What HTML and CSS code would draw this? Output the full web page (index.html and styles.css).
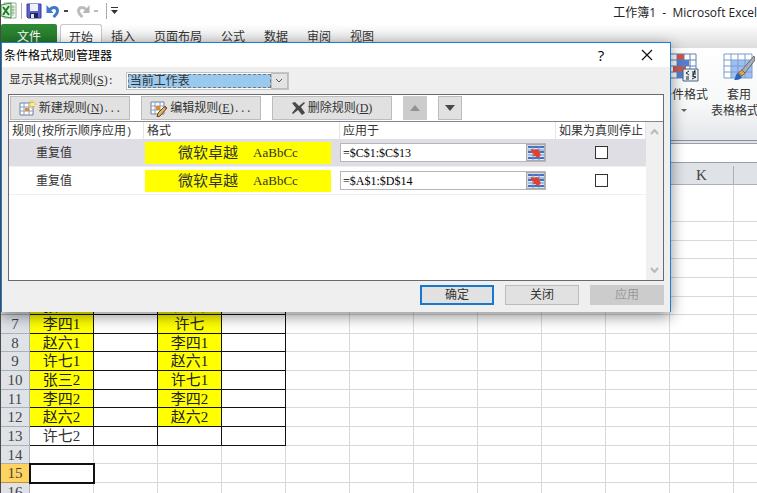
FILE: index.html
```html
<!DOCTYPE html>
<html lang="zh-CN">

<head>
    <meta charset="UTF-8">
    <meta name="viewport" content="width=device-width, initial-scale=1.0">
    <title>工作簿1 - Microsoft Excel</title>
    <link rel="stylesheet" href="styles.css">
</head>

<body>
    <header class="title-bar">
        <div class="quick-access">
            <svg class="app-icon" width="16" height="18" viewBox="0 0 16 18">
                <path d="M3 1h12v15H3z" fill="#fff" stroke="#8cb08c"/>
                <path d="M9 5h5M9 8h5M9 11h5M12 3v11" stroke="#8cbc8c"/>
                <path d="M0 3l10-2v15L0 14z" fill="#e3f1df" stroke="#3b8b44"/>
                <path d="M2 5l6 8M8 4l-6 9" stroke="#16812b" stroke-width="2"/>
            </svg>
            <span class="divider"></span>
            <button class="icon-btn" aria-label="保存">
                <svg width="16" height="16" viewBox="0 0 16 16">
                    <path d="M1 1h14v14H2l-1-1z" fill="#5b62cf" stroke="#3b3d9c"/>
                    <path d="M4 1h8v7H4z" fill="#eef2fc"/>
                    <path d="M4 10h8v5H4z" fill="#20264f"/>
                    <path d="M5 11h3v4H5z" fill="#dde2f2"/>
                </svg>
            </button>
            <button class="icon-btn" aria-label="撤消">
                <svg width="14" height="14" viewBox="0 0 13 14">
                    <path d="M3 6c3-4 8-3 8 1 0 3-2 4-4 6" fill="none" stroke="#3f78c8" stroke-width="3"/>
                    <path d="M0 1v8h7z" fill="#3f78c8"/>
                </svg>
            </button>
            <span class="caret"></span>
            <button class="icon-btn" aria-label="恢复">
                <svg width="14" height="14" viewBox="0 0 13 14">
                    <path d="M10 6c-3-4-8-3-8 1 0 3 2 4 4 6" fill="none" stroke="#bdbdbd" stroke-width="3"/>
                    <path d="M13 1v8H6z" fill="#b5b5b5"/>
                </svg>
            </button>
            <span class="caret disabled"></span>
            <span class="divider"></span>
            <svg width="7" height="7" viewBox="0 0 7 7">
                <path d="M0 0h7v1H0zM0 3h7L3.500 7z" fill="#333"/>
            </svg>
        </div>
        <div class="window-title">工作簿1 &nbsp;- &nbsp;Microsoft Excel</div>
    </header>

    <nav class="tabs">
        <button class="tab file">文件</button>
        <button class="tab active">开始</button>
        <button class="tab">插入</button>
        <button class="tab">页面布局</button>
        <button class="tab">公式</button>
        <button class="tab">数据</button>
        <button class="tab">审阅</button>
        <button class="tab">视图</button>
    </nav>

    <div class="ribbon">
        <button class="ribbon-btn">
            <svg width="32" height="30" viewBox="0 0 32 30">
                <path d="M2 1h26v24H2z" fill="#fff"/>
                <path d="M9 1h7v6H9zM5 13h13v6H5z" fill="#e2513f"/>
                <path d="M9 7h12v6H9zM9 19h6v6H9z" fill="#4f80dd"/>
                <path d="M2 1h26v24H2zM2 7h26M2 13h26M2 19h26M9 1v24M16 1v24M22 1v24" fill="none" stroke="#6480ad"/>
                <path d="M15 16h15v12H15z" fill="#eaf1f8" stroke="#47617f"/>
                <path d="M21 18l-3 2 3 2M18 24h3M24 19h4M24 21h4M27 17l-2 6M24 23l4 1-4 2M18 26h3" fill="none" stroke="#222"/>
            </svg>
            <span>条件格式</span>
            <span class="caret"></span>
        </button>
        <button class="ribbon-btn">
            <svg width="32" height="30" viewBox="0 0 32 30">
                <path d="M1 1h28v24H1z" fill="#fff"/>
                <path d="M8 7h21v18H8z" fill="#9dbff5"/>
                <path d="M1 1h28v24H1zM1 7h28M1 13h28M1 19h28M8 1v24M15 1v24M22 1v24" fill="none" stroke="#7b9cc9"/>
                <path d="M31 3l-12 14 3 3 10-13z" fill="#a7afb5" stroke="#666e75"/>
                <path d="M19 17l3 3-3 3-4-3z" fill="#d7a15b" stroke="#98652b"/>
                <path d="M15 20l4 4c-2 3-5 3-8 3 2-2 1-6 4-7z" fill="#2e63bc"/>
            </svg>
            <span>套用</span>
            <span class="with-caret">表格格式<span class="caret"></span></span>
        </button>
    </div>

    <div class="formula-bar"></div>

    <main class="sheet">
        <table class="grid">
            <thead>
                <tr>
                    <th class="corner"></th>
                    <th>A</th><th>B</th><th>C</th><th>D</th><th>E</th><th>F</th><th>G</th><th>H</th><th>I</th><th>J</th><th>K</th><th></th>
                </tr>
            </thead>
            <tbody id="grid-body"></tbody>
        </table>
    </main>

    <section class="dialog" role="dialog" aria-labelledby="dialog-title">
        <div class="dialog-title">
            <h1 id="dialog-title">条件格式规则管理器</h1>
            <button class="title-btn help" aria-label="帮助">?</button>
            <button class="title-btn" aria-label="关闭窗口">
                <svg width="12" height="12" viewBox="0 0 12 12">
                    <path d="M1 1l10 10M11 1L1 11" stroke="#111" stroke-width="1.200"/>
                </svg>
            </button>
        </div>
        <div class="dialog-body">
            <div class="scope">
                <label for="scope">显示其格式规则(<u>S</u>)<span class="mono">:</span></label>
                <div class="select-box">
                    <select id="scope">
                        <option>当前工作表</option>
                        <option>当前选择</option>
                    </select>
                    <svg class="select-arrow" width="17" height="16" viewBox="0 0 17 16">
                        <path d="M0 0h17v16H0z" fill="#bdbdbd"/>
                        <path d="M1 1h15v14H1z" fill="#e3e3e3"/>
                        <path d="M5 6l3 3 3-3" fill="none" stroke="#555"/>
                    </svg>
                </div>
            </div>

            <div class="rules">
                <div class="toolbar">
                    <button class="btn wide">
                        <svg width="18" height="17" viewBox="0 0 18 17">
                            <path d="M1 3h13v12H1z" fill="#fff" stroke="#6d80a3"/>
                            <path d="M1 7h13M1 11h13M5 3v12M10 3v12" stroke="#8b9cba"/>
                            <path d="M6 8h4v3H6z" fill="#d98d35"/>
                            <path d="M13 0v9M9 4h9M10 1l6 6M16 1l-6 6" stroke="#f2c440"/>
                            <path d="M12 3h3v3h-3z" fill="#fff08c"/>
                        </svg>
                        <span>新建规则(<u>N</u>)<span class="mono">...</span></span>
                    </button>
                    <button class="btn wide">
                        <svg width="18" height="17" viewBox="0 0 18 17">
                            <path d="M1 2h13v12H1z" fill="#fff" stroke="#6d80a3"/>
                            <path d="M1 6h13M1 10h13M5 2v12M10 2v12" stroke="#8b9cba"/>
                            <path d="M6 6h4v4H6z" fill="#d98d35"/>
                            <path d="M15 6l2 2-7 8-3 1 1-4z" fill="#e9b556" stroke="#57452c"/>
                            <path d="M15 6l2 2-2 1-1-2z" fill="#ca554c"/>
                        </svg>
                        <span>编辑规则(<u>E</u>)<span class="mono">...</span></span>
                    </button>
                    <button class="btn wide">
                        <svg width="14" height="13" viewBox="0 0 14 13">
                            <path d="M0 1l3-1 4 4 5-4 1 1-4 4 4 6-3 2-4-5-5 4-1-1 4-5z" fill="#484848"/>
                        </svg>
                        <span>删除规则(<u>D</u>)</span>
                    </button>
                    <button class="btn square" aria-label="上移" disabled>
                        <svg width="10" height="6" viewBox="0 0 10 6"><path d="M5 0l5 6H0z" fill="#929292"/></svg>
                    </button>
                    <button class="btn square" aria-label="下移">
                        <svg width="10" height="6" viewBox="0 0 10 6"><path d="M0 0h10L5 6z" fill="#484848"/></svg>
                    </button>
                </div>
                <div class="list">
                    <table class="rule-table">
                        <thead>
                            <tr>
                                <th class="col-rule">规则<span class="mono">(</span>按所示顺序应用<span class="mono">)</span></th>
                                <th class="col-format">格式</th>
                                <th class="col-range">应用于</th>
                                <th class="col-stop">如果为真则停止</th>
                            </tr>
                        </thead>
                        <tbody>
                            <tr class="selected">
                                <td class="name">重复值</td>
                                <td><div class="preview">微软卓越<span class="sample">AaBbCc</span></div></td>
                                <td>
                                    <div class="range">
                                        <input type="text" value="=$C$1:$C$13" aria-label="应用于">
                                        <button class="picker" aria-label="选择区域">
                                            <svg width="16" height="14" viewBox="0 0 16 14">
                                                <path d="M0 0h16v14H0z" fill="#dce8fa"/>
                                                <path d="M0 1h16M0 6h16M0 12h16" stroke="#466fc6" stroke-width="2"/>
                                                <path d="M0 4h16M0 9h16M5 0v14M11 0v14" stroke="#7590bd"/>
                                                <path d="M3 3l3 1 2-1 3 1v2l2 3-3 3-3-2H5l1-2-3-2z" fill="#df422d"/>
                                            </svg>
                                        </button>
                                    </div>
                                </td>
                                <td class="stop"><input type="checkbox" aria-label="如果为真则停止"></td>
                            </tr>
                            <tr>
                                <td class="name">重复值</td>
                                <td><div class="preview">微软卓越<span class="sample">AaBbCc</span></div></td>
                                <td>
                                    <div class="range">
                                        <input type="text" value="=$A$1:$D$14" aria-label="应用于">
                                        <button class="picker" aria-label="选择区域">
                                            <svg width="16" height="14" viewBox="0 0 16 14">
                                                <path d="M0 0h16v14H0z" fill="#dce8fa"/>
                                                <path d="M0 1h16M0 6h16M0 12h16" stroke="#466fc6" stroke-width="2"/>
                                                <path d="M0 4h16M0 9h16M5 0v14M11 0v14" stroke="#7590bd"/>
                                                <path d="M3 3l3 1 2-1 3 1v2l2 3-3 3-3-2H5l1-2-3-2z" fill="#df422d"/>
                                            </svg>
                                        </button>
                                    </div>
                                </td>
                                <td class="stop"><input type="checkbox" aria-label="如果为真则停止"></td>
                            </tr>
                        </tbody>
                    </table>
                    <div class="scrollbar">
                        <svg width="9" height="6" viewBox="0 0 9 6"><path d="M1 5l3.500-4L8 5" fill="none" stroke="#b9b9b9" stroke-width="2"/></svg>
                        <svg width="9" height="6" viewBox="0 0 9 6"><path d="M1 1l3.500 4L8 1" fill="none" stroke="#b9b9b9" stroke-width="2"/></svg>
                    </div>
                </div>
            </div>

            <div class="actions">
                <button class="btn default">确定</button>
                <button class="btn">关闭</button>
                <button class="btn" disabled>应用</button>
            </div>
        </div>
    </section>

    <script src="script.js"></script>
</body>

</html>
```

FILE: styles.css
```css
* {
    box-sizing: border-box;
}

body {
    margin: 0;
    height: 100vh;
    overflow: hidden;
    position: relative;
    border-left: 1px solid #4a4a4a;
    background-color: #fff;
    color: #333;
    font-family: "Liberation Serif", "Noto Sans CJK SC", sans-serif;
    font-size: 12px;
    line-height: 16px;
}

button,
input,
select {
    font: inherit;
    color: inherit;
    margin: 0;
    padding: 0;
}

svg {
    display: block;
    flex: none;
}

.mono {
    font-family: "Liberation Mono", monospace;
    font-size: 10px;
    line-height: 1;
}

/* title bar */
.title-bar {
    display: flex;
    justify-content: space-between;
    height: 24px;
    font-family: "Open Sans", "Noto Sans CJK SC", sans-serif;
}

.quick-access {
    display: flex;
    align-items: center;
    gap: 4px;
    height: 21px;
}

.quick-access .caret {
    margin-right: 4px;
}

.divider {
    width: 1px;
    height: 16px;
    background-color: #aaa;
}

.icon-btn {
    border: none;
    background: none;
}

.caret {
    width: 4px;
    height: 2px;
    background-color: #444;
}

.caret.disabled {
    background-color: #bbb;
}

.window-title {
    padding-top: 5px;
    color: #222;
    white-space: nowrap;
}

/* ribbon */
.tabs {
    display: flex;
    height: 24px;
    background: linear-gradient(#fff, #dcdcdc);
    font-family: "Noto Sans CJK SC", sans-serif;
}

.tab {
    border: none;
    background: none;
    padding: 0;
    margin-right: 19px;
    white-space: nowrap;
}

.tab.file {
    width: 56px;
    margin-right: 3px;
    border-radius: 2px 2px 0 0;
    background: linear-gradient(#2f8a35, #1d6f25);
    color: #fff;
}

.tab.active {
    width: 42px;
    margin-right: 9px;
    border: 1px solid #c4c7cb;
    border-bottom: none;
    border-radius: 3px 3px 0 0;
    background-color: #fff;
}

.ribbon {
    display: flex;
    gap: 3px;
    height: 93px;
    padding: 5px 0 0 659px;
    border-bottom: 1px solid #8b9097;
    background: linear-gradient(#fff, #f7f8f8 60%, #e4e7eb);
    font-family: "Noto Sans CJK SC", sans-serif;
}

.ribbon-btn {
    display: flex;
    flex: none;
    flex-direction: column;
    align-items: center;
    border: none;
    background: none;
    white-space: nowrap;
}

.ribbon-btn svg {
    margin-bottom: 3px;
}

.ribbon-btn .caret {
    width: 6px;
    height: 3px;
    margin-top: 7px;
    background-color: #666;
    clip-path: polygon(0 0, 100% 0, 50% 100%);
}

.with-caret {
    display: flex;
    gap: 2px;
}

.formula-bar {
    height: 25px;
    border: solid #dfe3e8;
    border-width: 2px 0 3px;
    box-shadow: inset 0 1px #9ba0a8, inset 0 -1px #9ba0a8;
}

/* worksheet */
.sheet {
    overflow: hidden;
}

.grid {
    width: 797px;
    table-layout: fixed;
    border-collapse: separate;
    border-spacing: 0;
    font-size: 15px;
    line-height: 16px;
}

.grid th,
.grid td {
    height: 19px;
    padding: 0;
    border: solid #d9d9d9;
    border-width: 0 1px 1px 0;
    font-weight: normal;
    text-align: center;
    white-space: nowrap;
}

.grid .short td,
.grid .short th {
    height: 18px;
}

.grid .tall td,
.grid .tall th {
    height: 37px;
}

.grid th {
    border-color: #a9b0b8;
    background-color: #dfe3e8;
    color: #444;
}

.grid .corner {
    width: 29px;
}

.grid .boxed {
    border-color: #111;
}

.grid .duplicate {
    background-color: #ff0;
    color: #222;
}

.grid .current th {
    border-color: #c09330;
    background-color: #ffd35f;
}

.grid .cursor {
    outline: 2px solid #111;
    outline-offset: -1px;
}

/* dialog */
.dialog {
    position: absolute;
    top: 42px;
    left: 0;
    width: 670px;
    border: 1px solid #1a7dd0;
    border-bottom: none;
    background-color: #efefef;
    box-shadow: 0 4px 14px rgba(0, 0, 0, 0.45);
}

.dialog-title {
    display: flex;
    align-items: center;
    height: 24px;
    padding-left: 2px;
    background-color: #fff;
    color: #000;
}

.dialog-title h1 {
    flex: 1;
    margin: 0;
    font-family: "Noto Sans CJK SC", sans-serif;
    font-size: 12px;
    font-weight: normal;
    line-height: 16px;
}

.title-btn {
    display: flex;
    align-items: center;
    justify-content: center;
    width: 46px;
    height: 24px;
    border: none;
    background: none;
}

.title-btn.help {
    font-family: "Open Sans", sans-serif;
    font-size: 15px;
}

.dialog-body {
    padding: 5px 6px 7px;
}

.scope {
    display: flex;
    gap: 12px;
    height: 22px;
    padding-left: 1px;
}

.select-box {
    position: relative;
    width: 163px;
    height: 18px;
    border: 1px solid #c4c4c4;
    background-color: #fff;
}

.select-box select {
    appearance: none;
    display: block;
    width: 143px;
    height: 14px;
    margin: 1px;
    padding-left: 1px;
    border: 1px dashed #777;
    border-radius: 0;
    background-color: #99c9ef;
    line-height: 12px;
}

.select-arrow {
    position: absolute;
    top: 0;
    right: 0;
    pointer-events: none;
}

.rules {
    border: 1px solid #696970;
    background-color: #fff;
}

.toolbar {
    display: flex;
    gap: 11px;
    padding: 1px;
    border-bottom: 1px solid #85858f;
}

.btn {
    display: flex;
    align-items: center;
    justify-content: center;
    gap: 2px;
    width: 74px;
    height: 20px;
    border: 1px solid #bcbcbc;
    background-color: #e1e1e1;
    white-space: nowrap;
}

.btn.wide {
    width: 120px;
    height: 24px;
}

.btn.square {
    width: 24px;
    height: 24px;
}

.btn.default {
    border: 2px solid #1479cf;
}

.btn:disabled {
    border-color: #ccc;
    background-color: #ccc;
    color: #9a9a9a;
}

.list {
    display: flex;
    height: 158px;
}

.rule-table {
    flex: 1;
    align-self: flex-start;
    table-layout: fixed;
    border-collapse: separate;
    border-spacing: 0;
}

.rule-table th {
    height: 17px;
    padding: 0 0 0 3px;
    border-right: 1px solid #e5e5e5;
    font-weight: normal;
    text-align: left;
    white-space: nowrap;
}

.rule-table td {
    height: 28px;
    padding: 0;
    border-bottom: 1px solid #f0f0f0;
}

.rule-table .selected td {
    background-color: #dfdee4;
}

.col-rule {
    width: 135px;
}

.col-format {
    width: 196px;
}

.col-stop {
    width: 90px;
}

.rule-table .name {
    padding-left: 27px;
}

.preview {
    display: flex;
    align-items: center;
    justify-content: center;
    gap: 15px;
    width: 186px;
    height: 22px;
    margin-left: 1px;
    background-color: #ff0;
    font-size: 15px;
}

.sample {
    font-size: 13px;
}

.range {
    display: flex;
    width: 206px;
    height: 19px;
    border: 1px solid #b5b5bb;
    background-color: #fff;
}

.range input {
    flex: 1;
    min-width: 0;
    padding-left: 2px;
    border: none;
    color: #000;
}

.picker {
    display: flex;
    align-items: center;
    justify-content: center;
    width: 19px;
    border: 1px solid #aaa;
    background-color: #d5d9df;
}

.rule-table .stop {
    text-align: center;
}

.stop input {
    appearance: none;
    display: block;
    width: 13px;
    height: 13px;
    margin: 0 auto;
    border: 1px solid #333;
    background-color: #fff;
}

.scrollbar {
    display: flex;
    flex-direction: column;
    align-items: center;
    justify-content: space-between;
    width: 17px;
    padding: 7px 0;
    background-color: #f0f0f0;
}

.actions {
    display: flex;
    justify-content: flex-end;
    gap: 11px;
    padding-top: 4px;
}
```

FILE: script.js
```js
const gridBody = document.querySelector("#grid-body");

const shortRows = [3, 6, 8, 11, 14];
const columnA = { 6: "张三1", 7: "李四1", 8: "赵六1", 9: "许七1", 10: "张三2", 11: "李四2", 12: "赵六2", 13: "许七2" };
const columnC = { 6: "赵六", 7: "许七", 8: "李四1", 9: "赵六1", 10: "许七1", 11: "李四2", 12: "赵六2" };

for (let row = 1; row <= 16; row++) {
    const tr = document.createElement("tr");
    if (row === 1) tr.classList.add("tall");
    if (shortRows.includes(row)) tr.classList.add("short");
    if (row === 15) tr.classList.add("current");

    let cells = `<th>${row}</th>`;
    for (let col = 0; col < 12; col++) {
        const text = col === 0 ? columnA[row] || "" : col === 2 ? columnC[row] || "" : "";
        const classes = [];
        if (col < 4 && row <= 13) classes.push("boxed");
        if (text && row < 13) classes.push("duplicate");
        if (col === 0 && row === 15) classes.push("cursor");
        cells += `<td class="${classes.join(" ")}">${text}</td>`;
    }
    tr.innerHTML = cells;
    gridBody.appendChild(tr);
}
```
